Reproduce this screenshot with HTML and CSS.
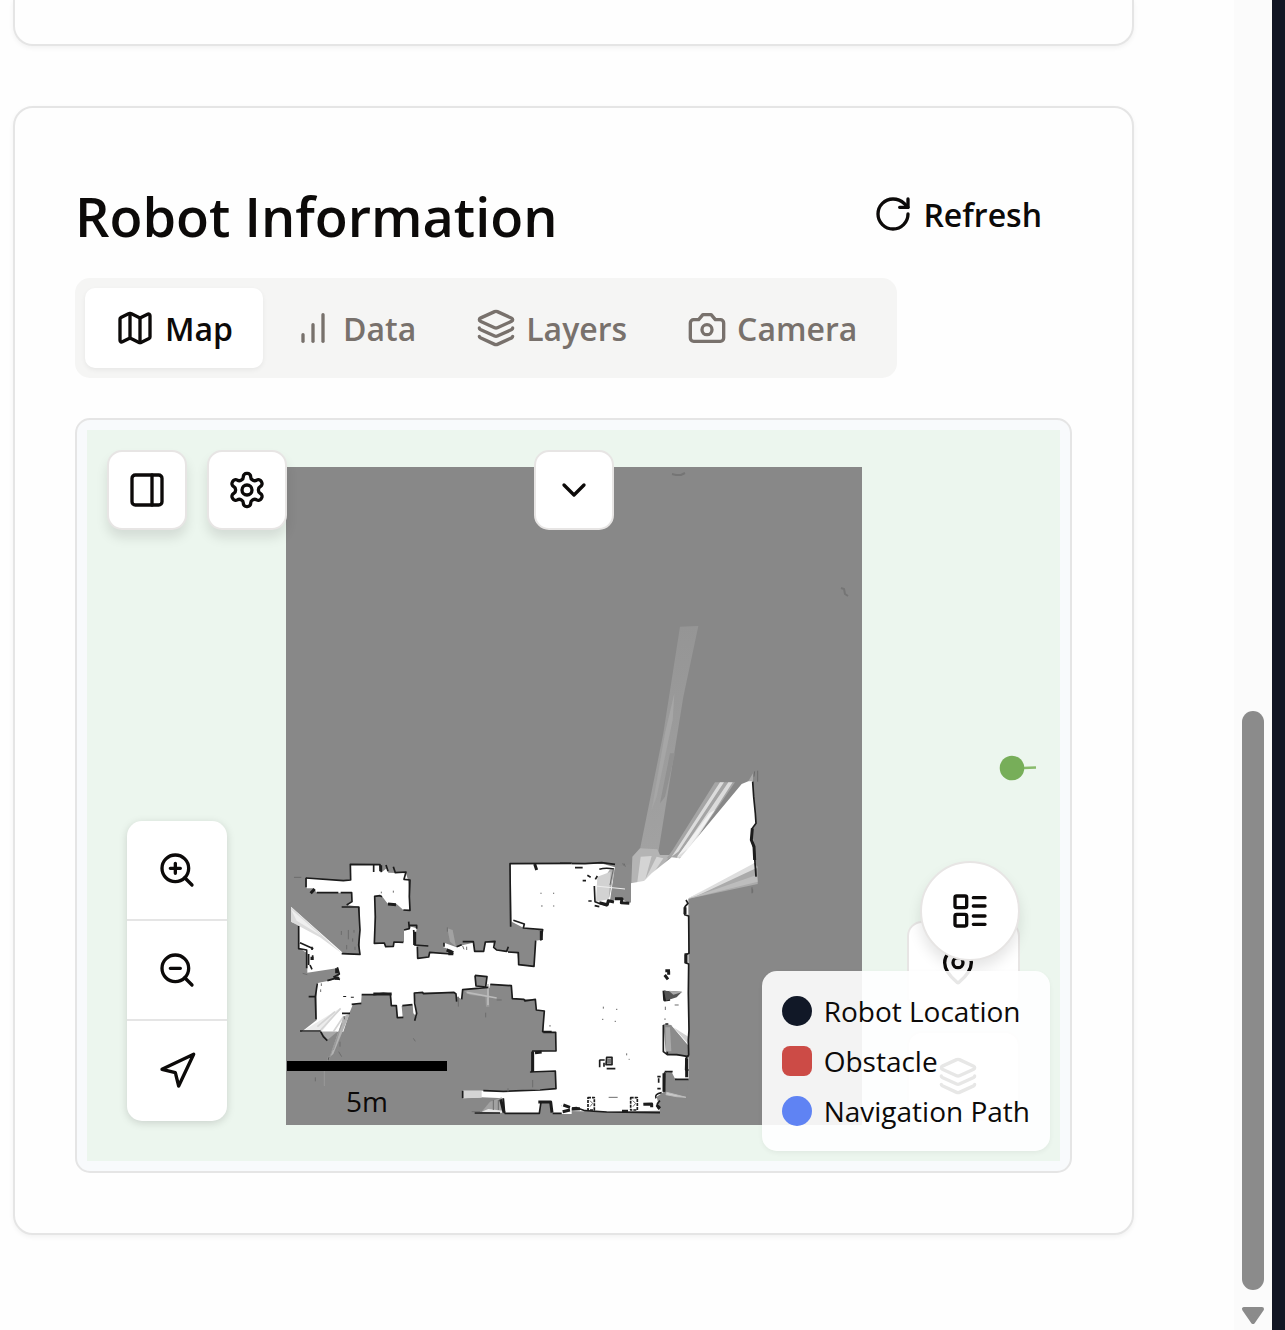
FILE: index.html
```html
<!DOCTYPE html>
<html lang="en">
<head>
<meta charset="utf-8">
<meta name="viewport" content="width=device-width, initial-scale=1">
<title>Robot Information</title>
<link rel="stylesheet" href="styles.css">
</head>
<body>
<svg class="sprite" aria-hidden="true">
  <symbol id="i-layers" viewBox="0 0 24 24"><path d="M12.83 2.18a2 2 0 0 0-1.66 0L2.6 6.08a1 1 0 0 0 0 1.83l8.58 3.91a2 2 0 0 0 1.66 0l8.58-3.9a1 1 0 0 0 0-1.83z"/><path d="M2 12a1 1 0 0 0 .58.91l8.6 3.91a2 2 0 0 0 1.65 0l8.58-3.9A1 1 0 0 0 22 12"/><path d="M2 17a1 1 0 0 0 .58.91l8.6 3.91a2 2 0 0 0 1.65 0l8.58-3.9A1 1 0 0 0 22 17"/></symbol>
</svg>
<main class="page">
  <section class="card card-previous"></section>

  <section class="card card-robot">
    <header class="card-header">
      <h2 class="title">Robot Information</h2>
      <button class="refresh" type="button">
        <svg class="icon" viewBox="0 0 24 24"><path d="M21 12a9 9 0 1 1-9-9c2.520 0 4.930 1 6.740 2.740L21 8"/><path d="M21 3v5h-5"/></svg>
        Refresh
      </button>
    </header>

    <div class="tabs" role="tablist">
      <button class="tab tab-active" type="button" role="tab" aria-selected="true">
        <svg class="icon" viewBox="0 0 24 24"><path d="M14.106 5.553a2 2 0 0 0 1.788 0l3.659-1.830A1 1 0 0 1 21 4.619v12.764a1 1 0 0 1-.553.894l-4.553 2.277a2 2 0 0 1-1.788 0l-4.212-2.106a2 2 0 0 0-1.788 0l-3.659 1.830A1 1 0 0 1 3 19.381V6.618a1 1 0 0 1 .553-.894l4.553-2.277a2 2 0 0 1 1.788 0z"/><path d="M15 5.764v15"/><path d="M9 3.236v15"/></svg>
        Map
      </button>
      <button class="tab" type="button" role="tab" aria-selected="false">
        <svg class="icon" viewBox="0 0 24 24"><path d="M6 20v-4"/><path d="M12 20V10"/><path d="M18 20V4"/></svg>
        Data
      </button>
      <button class="tab" type="button" role="tab" aria-selected="false">
        <svg class="icon"><use href="#i-layers"/></svg>
        Layers
      </button>
      <button class="tab" type="button" role="tab" aria-selected="false">
        <svg class="icon" viewBox="0 0 24 24"><path d="M14.500 4h-5L7 7H4a2 2 0 0 0-2 2v9a2 2 0 0 0 2 2h16a2 2 0 0 0 2-2V9a2 2 0 0 0-2-2h-3l-2.500-3z"/><circle cx="12" cy="13" r="3"/></svg>
        Camera
      </button>
    </div>

    <div class="map-frame">
      <div class="map-canvas">
        <svg class="occupancy" viewBox="286 467 576 658" role="img" aria-label="Occupancy map">
          <defs>
            <linearGradient id="beam" x1="0" y1="0" x2="0" y2="1"><stop offset="0" stop-color="#959595"/><stop offset="1" stop-color="#a2a2a2"/></linearGradient>
          </defs>
          <rect x="286" y="467" width="576" height="658" fill="#888"/>
          <!-- far scan beams -->
          <g transform="translate(620 610) scale(.33333)">
            <path d="M180 50L235 48L190 260L112 745L60 718L130 370Z" fill="url(#beam)"/>
            <path d="M163 250L158 330L110 560L95 600L135 370Z" fill="#a6a6a6"/>
            <path d="M150 430L165 430L135 560L120 580Z" fill="#919191"/>
            <path d="M37 740L60 715L112 718L120 735L155 735L70 830L32 870Z" fill="#b4b4b4"/>
            <path d="M62 740L95 738L70 830L50 830Z M110 740L130 745L80 820L75 810Z" fill="#d4d4d4"/>
            <path d="M285 517L345 517L190 745L140 745L158 720Z" fill="#a5a5a5"/>
            <path d="M300 517L312 517L175 725L155 740Z M325 517L338 517L195 740L170 745Z" fill="#dcdcdc"/>
            <path d="M268 610L285 600L205 715L170 742Z" fill="#f1f1f1"/>
            <path d="M398 755L413 770L413 822L200 868Z" fill="#ababab"/>
            <path d="M398 755L408 775L230 858L200 868Z" fill="#dedede"/>
            <path d="M410 795L413 815L200 868Z" fill="#bdbdbd"/>
            <path d="M32 890L34 822L55 820L70 815L95 790L155 742L180 745L365 522L385 514L397 505L400 540L408 640L397 660L405 758L200 868L195 890Z" fill="#fff"/>
            <path d="M385 514L399 490V514Z" fill="#aaa"/>
            <path d="M404 484L402 500M413 482V515M410 775V800" class="speck"/>
            <path d="M398 515L401 560L406 610L408 640L396 656L395 690L402 715L405 758L408 800" class="wall"/>
            <path d="M397 655L394 690L402 710L404 750" class="wall wall-thick"/>
            <path d="M396 832V850M8 760L15 775M0 838L16 836" class="speck"/>
          </g>
          <!-- main hall -->
          <g transform="translate(560 840) scale(.33333)">
            <path d="M-5 70L130 72L165 82L152 180L185 178L208 190L212 130L385 100L385 175L386 720L345 716L318 695L312 755L290 770L300 812L130 815L-5 812Z" fill="#fff"/>
            <path d="M150 88L164 90L148 172L128 178L134 112Z" fill="#b0b0b0"/>
            <path d="M112 110L152 95L146 178L108 185Z" fill="#d2d2d2"/>
            <path d="M165 82L213 72L213 188L185 176L150 182Z" fill="#8a8a8a"/>
            <path d="M106 138L195 147" stroke="#eee" stroke-width="3"/>
            <path d="M310 552L334 555L384 612L384 648L318 644Z" fill="#8b8b8b"/>
            <path d="M316 562L330 562L334 634L318 634Z" fill="#a9a9a9"/>
            <path d="M334 556L386 575L386 618Z" fill="#fff"/>
            <path d="M340 562L385 590L385 612Z" fill="#d0d0d0"/>
            <path d="M314 698L335 696L345 716L386 720L380 775L318 760Z" fill="#888"/>
            <path d="M320 757L378 772L350 770L318 764Z" fill="#ccc" stroke="#bbb" stroke-width="3"/>
            <path d="M0 70L75 71L125 68L165 73" class="wall"/>
            <path d="M45 83H68M118 88Q136 82 162 87M112 108L106 118M103 138L105 185L122 192L142 198M85 183H95M68 122H78M82 106L92 112M104 197L118 200" class="wall"/>
            <path d="M160 88L150 135" class="speck"/>
            <path d="M118 188L142 194L145 182L162 186M165 176L186 176L184 188L208 190" class="wall wall-thick"/>
            <path d="M378 180L384 190L375 200L374 224L386 228L387 340L376 345V368L386 372L385 460L387 570L385 600L386 645L378 655L377 690L386 690M386 718L345 718" class="wall"/>
            <path d="M375 202V222M378 340V370M380 655V712" class="wall wall-thick"/>
            <path d="M316 392H330M314 405L324 418M326 394V404M312 452L314 480L330 478" class="wall wall-thick"/>
            <path d="M312 452L366 455L350 472L318 482Z" fill="#555"/>
            <path d="M326 452L368 456L340 464Z" fill="#aaa"/>
            <path d="M316 552H325M310 555V635L322 644H350L386 650M314 695H338M314 697L312 755M322 635V645M292 710H302M296 715V728M292 746H302M305 758Q282 762 288 775M300 782Q284 796 298 808" class="wall"/>
            <path d="M312 700V755M250 793L275 792L275 802M290 795L300 805" class="wall wall-thick"/>
            <path d="M140 652H156V674H138ZM118 660H134M119 660V682M132 668V680M140 686H166" class="wall"/>
            <path d="M141 656H153V671H141Z" fill="#777"/>
            <path d="M0 795L25 795L28 805L50 803L75 812L140 816L300 818" class="wall"/>
            <path d="M0 795H20M30 808L60 806M186 814H204" class="wall wall-thick"/>
            <path d="M84 773H103V810H84ZM212 773H232V810H212Z" class="wall" stroke-dasharray="9 3"/>
            <path d="M90 782L98 790L90 800M218 782L227 790L219 800" class="speck"/>
            <path d="M130 500V506M168 508H172M126 538H130M164 544H168M200 640V646M206 658H209M146 772H173M316 500V510M315 535V540M344 495H356M192 70L196 80M578 148V158" class="speck"/>
          </g>
          <!-- corridor and west rooms -->
          <g transform="translate(280 850) scale(.33333)">
            <path d="M80 85L190 92L212 90L212 44L300 45L303 68L320 55L325 68L378 70L384 90L389 180L370 180L350 162L322 160L305 137L284 137L284 280L312 280L316 290L340 290L342 278L372 277L372 238L388 236L394 230L410 235L403 285L412 290L412 325L447 321L450 307L500 312L522 312L515 300L490 292L492 278L530 292L550 285L580 278L584 305L611 305L617 278L640 278L646 300L712 310L716 345L762 350L768 272L780 270L788 240L733 235L695 215L692 40L875 40V775L845 765L848 790L818 790L814 756L783 756L778 790L674 790L672 745L605 742L548 745L548 722L670 722L828 716L826 665L757 667L758 605L826 602L826 547L790 545L793 482L768 480L766 448L697 446L694 407L631 402L628 414L548 418L545 448L532 440L522 427L403 428L410 500L400 490L398 463L365 468L368 502L352 502L350 467L335 467L333 431L245 434L243 462L218 465L208 490L190 545L65 545L110 510L110 400L168 388L178 375L170 355L82 368L82 310L58 295L57 225L33 215L33 170L185 305L190 312L240 314L240 170L200 165L215 155L215 128L110 128L100 115L80 115Z" fill="#fff"/>
            <path d="M845 762H875V792H845Z" fill="#fff"/>
            <path d="M585 376L621 380L617 411L588 408Z" fill="#888"/>
            <path d="M33 170L185 310L120 262L33 215Z" fill="#dcdcdc"/>
            <path d="M33 178L125 258L50 212Z" fill="#efefef"/>
            <path d="M65 545L180 475L125 545Z" fill="#ececec"/>
            <path d="M182 475L118 545M165 485L112 530M190 500L160 545" stroke="#d5d5d5" stroke-width="5"/>
            <path d="M190 500L210 490L160 612L150 620Z" fill="#b3b3b3"/>
            <path d="M186 520L150 620M178 545L160 600" stroke="#999" stroke-width="3"/>
            <path d="M125 545L172 545L142 570Z" fill="#a8a8a8"/>
            <path d="M150 620L140 650L145 620ZM133 660V708" stroke="#999" stroke-width="3"/>
            <path d="M548 722L605 722V743L548 745Z" fill="#d4d4d4"/>
            <path d="M630 755L665 742L672 785L605 785Z" fill="#a2a2a2"/>
            <path d="M605 785L625 777L668 782V789Z" fill="#e8e8e8"/>
            <path d="M502 235L518 240L528 290L510 275Z" fill="#a2a2a2"/>
            <path d="M548 420L625 414L628 470L618 470L616 440L570 435Z" fill="#9b9b9b"/>
            <path d="M560 427L650 444M624 402V465" stroke="#bbb" stroke-width="5"/>
            <path d="M78 83L78 112M110 128H175M182 128H215L216 155L200 165M185 171L236 171L240 240L236 285L240 313L185 311" class="wall"/>
            <path d="M78 84L190 92L212 90L211 43L300 44L304 66M281 46V66M318 45L324 64M340 50L346 68L378 66L372 88L390 90L388 140L390 181L370 180" class="wall"/>
            <path d="M92 130L104 117M302 46V64M324 162L348 164" class="wall wall-thick"/>
            <path d="M306 140L300 137L284 139L286 200L283 280L313 279L317 290L340 289L342 276L370 277M372 240L388 236L386 215M388 226H410V236M401 240L404 285L445 288M412 290L413 325L446 321L449 307L512 312" class="wall"/>
            <path d="M404 245V285M500 300L520 308M505 311H520" class="wall wall-thick"/>
            <path d="M492 278V290M530 290L545 284M548 275L580 275L584 304L611 304L616 276L645 274L641 292L650 300L680 304L685 290M684 306L715 308L716 344L762 349L767 272M700 211L733 222L730 234L788 239L782 272M692 230L691 150L690 41L875 40" class="wall"/>
            <path d="M784 242V270M764 42L770 60" class="wall wall-thick"/>
            <path d="M585 376L621 380L617 411L588 408L585 376M545 448L548 419L625 412M631 403L694 407L697 446L732 448L735 453L766 448L769 480L793 483L788 545L815 545M790 547H827L828 603H758L757 666L752 666L826 663L828 716L780 720L670 724L610 722M530 455L528 432L522 427L430 431L428 427L403 429L404 460L410 490L404 512M397 464L367 467M370 502L352 503L349 467L334 467L331 432L310 430L280 434L245 434M244 460L215 463" class="wall"/>
            <path d="M280 432H335M758 605V666M765 608L785 606M662 748L672 788M775 756H812L816 788M850 765L870 772M848 785L870 780" class="wall wall-thick"/>
            <path d="M548 722V745M670 745L674 790M584 789H660M674 790H778L783 756M818 790L845 790" class="wall"/>
            <path d="M56 228V296L80 300V355M60 278L100 296M86 312V345M96 290V300M98 316V330M90 345L96 358M172 352L178 372L160 382M142 392L165 385L180 388M112 400L106 440L108 508M86 440H108M60 543H122M122 545L130 560L142 572M186 490H210" class="wall"/>
            <path d="M170 355V370M165 385H178M96 320V330M194 438V441M217 440V443" class="wall wall-thick"/>
            <path d="M68 370L82 374M42 82H64M184 243V255M205 240V268M222 240V248M218 265V275M200 285V298M225 290V300M180 575V590M176 605L185 620M106 682V694M400 565L406 574M617 488V502M304 125V130M340 122V128M783 128V132M821 128V132M783 168H788M819 168H823M548 288L552 298M560 290V300M684 715V725M575 785H600M640 750V780M655 750V780M535 440V470M650 450H665M758 690V712M502 232V245M810 525V530M124 400V408M122 418V426M192 498L194 508" class="speck"/>
          </g>
          <path d="M672 474L676 475L681 475L685 473M841 588L844 589L845 594L848 596" stroke="#757575" stroke-width="2" fill="none"/>
        </svg>

        <svg class="robot" viewBox="0 0 38 26" aria-hidden="true"><path d="M24 13L37 12.500" stroke="#88bb6b" stroke-width="2.500"/><circle cx="13" cy="13" r="12.300" fill="#77ae59"/></svg>

        <div class="toolbar">
          <button class="tool" type="button" aria-label="Toggle panel"><svg class="icon" viewBox="0 0 24 24"><rect x="3" y="3" width="18" height="18" rx="2"/><path d="M15 3v18"/></svg></button>
          <button class="tool" type="button" aria-label="Settings"><svg class="icon" viewBox="0 0 24 24"><path d="M12.220 2h-.44a2 2 0 0 0-2 2v.18a2 2 0 0 1-1 1.730l-.43.25a2 2 0 0 1-2 0l-.15-.08a2 2 0 0 0-2.730.73l-.22.38a2 2 0 0 0 .73 2.730l.15.1a2 2 0 0 1 1 1.720v.51a2 2 0 0 1-1 1.740l-.15.09a2 2 0 0 0-.73 2.730l.22.38a2 2 0 0 0 2.730.73l.15-.08a2 2 0 0 1 2 0l.43.25a2 2 0 0 1 1 1.730V20a2 2 0 0 0 2 2h.44a2 2 0 0 0 2-2v-.18a2 2 0 0 1 1-1.730l.43-.25a2 2 0 0 1 2 0l.15.08a2 2 0 0 0 2.730-.73l.22-.39a2 2 0 0 0-.73-2.730l-.15-.08a2 2 0 0 1-1-1.740v-.5a2 2 0 0 1 1-1.740l.15-.09a2 2 0 0 0 .73-2.730l-.22-.38a2 2 0 0 0-2.730-.73l-.15.08a2 2 0 0 1-2 0l-.43-.25a2 2 0 0 1-1-1.730V4a2 2 0 0 0-2-2z"/><circle cx="12" cy="12" r="3"/></svg></button>
        </div>
        <button class="tool tool-expand" type="button" aria-label="Expand"><svg class="icon" viewBox="0 0 24 24"><path d="m6 9 6 6 6-6"/></svg></button>

        <div class="zoom">
          <button class="zoom-button" type="button" aria-label="Zoom in"><svg class="icon" viewBox="0 0 24 24"><circle cx="11" cy="11" r="8"/><path d="m21 21-4.350-4.350M11 8v6M8 11h6"/></svg></button>
          <button class="zoom-button" type="button" aria-label="Zoom out"><svg class="icon" viewBox="0 0 24 24"><circle cx="11" cy="11" r="8"/><path d="m21 21-4.350-4.350M8 11h6"/></svg></button>
          <button class="zoom-button" type="button" aria-label="Locate"><svg class="icon" viewBox="0 0 24 24"><path d="m3 11 19-9-9 19-2-8-8-2z"/></svg></button>
        </div>

        <div class="scale"><div class="scale-bar"></div>5m</div>

        <div class="side-tools">
          <button class="side-button" type="button" aria-label="Places"><svg class="icon" viewBox="0 0 24 24"><path d="M20 10c0 4.993-5.539 10.193-7.399 11.799a1 1 0 0 1-1.202 0C9.539 20.193 4 14.993 4 10a8 8 0 0 1 16 0"/><circle cx="12" cy="10" r="3"/></svg></button>
          <button class="side-button" type="button" aria-label="Map layers"><svg class="icon"><use href="#i-layers"/></svg></button>
        </div>
        <button class="legend-toggle" type="button" aria-label="Legend"><svg class="icon" viewBox="0 0 24 24"><rect x="3" y="3" width="7" height="7" rx="1"/><rect x="3" y="14" width="7" height="7" rx="1"/><path d="M14 4h7M14 9h7M14 15h7M14 20h7"/></svg></button>

        <ul class="legend">
          <li class="legend-row"><span class="swatch swatch-robot"></span>Robot Location</li>
          <li class="legend-row"><span class="swatch swatch-obstacle"></span>Obstacle</li>
          <li class="legend-row"><span class="swatch swatch-path"></span>Navigation Path</li>
        </ul>
      </div>
    </div>
  </section>
</main>
<div class="scrollbar" aria-hidden="true">
  <div class="scroll-thumb"></div>
  <svg class="scroll-arrow" viewBox="0 0 24 20"><path d="M3 3H21L12 16Z" fill="#8b8b8b" stroke="#8b8b8b" stroke-width="4" stroke-linejoin="round"/></svg>
</div>
<div class="backdrop-edge"></div>
</body>
</html>
```
FILE: styles.css
```css
* { box-sizing: border-box; }

body {
  margin: 0;
  min-height: 100vh;
  display: flex;
  background: #fefefe;
  color: #0c0a09;
  font-family: "Open Sans", "Noto Sans", sans-serif;
}

button {
  font: inherit;
  color: inherit;
  border: 0;
  padding: 0;
  background: none;
  display: flex;
  align-items: center;
  justify-content: center;
}

.sprite { position: absolute; width: 0; height: 0; }

.icon {
  width: 40px;
  height: 40px;
  flex: none;
  fill: none;
  stroke: currentColor;
  stroke-width: 2;
  stroke-linecap: round;
  stroke-linejoin: round;
}

.page {
  flex: 1;
  min-width: 0;
  padding: 0 100px 95px 13px;
  display: flex;
  flex-direction: column;
  gap: 60px;
}

.card {
  border: 2px solid #e5e5e5;
  border-radius: 20px;
  background: #fefefe;
  box-shadow: 0 2px 5px rgba(0, 0, 0, .05);
}

.card-previous {
  height: 46px;
  border-top: 0;
  border-top-left-radius: 0;
  border-top-right-radius: 0;
}

.card-robot { padding: 60px; }

.card-header {
  height: 92px;
  display: flex;
  align-items: center;
  justify-content: space-between;
}

.title {
  margin: 0;
  padding-top: 4px;
  font-size: 54px;
  line-height: 60px;
  font-weight: 600;
}

.refresh {
  height: 80px;
  padding: 0 30px;
  gap: 10px;
  font-size: 32px;
  font-weight: 600;
}

.tabs {
  width: fit-content;
  height: 100px;
  margin-top: 18px;
  padding: 10px;
  display: flex;
  border-radius: 15px;
  background: #f5f5f4;
  color: #78716c;
}

.tab {
  padding: 0 30px;
  gap: 10px;
  border-radius: 10px;
  font-size: 32px;
  font-weight: 600;
}

.tab-active {
  background: #fff;
  color: #0c0a09;
  box-shadow: 0 2px 5px rgba(0, 0, 0, .06);
}

.map-frame {
  margin-top: 40px;
  padding: 10px;
  border: 2px solid #e5e5e5;
  border-radius: 15px;
  background: #f8fafc;
}

.map-canvas {
  position: relative;
  height: 731px;
  display: flex;
  align-items: center;
  justify-content: center;
  background: #ecf6ee;
}

.occupancy { width: 576px; height: 658px; }

.wall {
  fill: none;
  stroke: #1c1c1c;
  stroke-width: 5;
  stroke-linejoin: round;
}

.wall-thick { stroke-width: 9; }

.speck {
  fill: none;
  stroke: #6c6c6c;
  stroke-width: 3;
}

.robot {
  position: absolute;
  top: 325px;
  right: 23px;
  width: 38px;
  height: 26px;
}

.toolbar {
  position: absolute;
  top: 20px;
  left: 20px;
  display: flex;
  gap: 20px;
}

.tool {
  width: 80px;
  height: 80px;
  border: 2px solid #e7e5e4;
  border-radius: 15px;
  background: #fff;
  box-shadow: 0 8px 12px rgba(0, 0, 0, .1);
}

.tool-expand {
  position: absolute;
  top: 20px;
  left: calc(50% - 40px);
  box-shadow: none;
}

.zoom {
  position: absolute;
  left: 40px;
  bottom: 40px;
  width: 100px;
  overflow: hidden;
  border-radius: 15px;
  background: #fff;
  box-shadow: 0 2px 8px rgba(0, 0, 0, .15);
}

.zoom-button {
  width: 100%;
  height: 100px;
  border-bottom: 2px solid #e5e5e5;
}

.zoom-button:last-child { border-bottom: 0; }

.scale {
  position: absolute;
  left: 200px;
  bottom: 40px;
  width: 160px;
  text-align: center;
  font-size: 28px;
  line-height: 40px;
}

.scale-bar {
  height: 10px;
  margin-bottom: 10px;
  background: #000;
}

.side-tools {
  position: absolute;
  right: 40px;
  bottom: 40px;
  display: flex;
  flex-direction: column;
  gap: 20px;
}

.side-button {
  width: 113px;
  height: 90px;
  padding-right: 11px;
  border: 2px solid #e7e5e4;
  border-radius: 15px;
  background: #fff;
}

.legend-toggle {
  position: absolute;
  right: 40px;
  bottom: 200px;
  width: 100px;
  height: 100px;
  border: 2px solid #e7e5e4;
  border-radius: 50%;
  background: #fff;
  box-shadow: 0 8px 14px rgba(0, 0, 0, .1);
}

.legend {
  position: absolute;
  right: 10px;
  bottom: 10px;
  margin: 0;
  padding: 20px;
  display: flex;
  flex-direction: column;
  gap: 10px;
  list-style: none;
  border-radius: 15px;
  background: rgba(255, 255, 255, .9);
  box-shadow: 0 2px 5px rgba(0, 0, 0, .05);
  font-size: 28px;
  line-height: 40px;
}

.legend-row {
  display: flex;
  align-items: center;
  gap: 12px;
}

.swatch {
  width: 30px;
  height: 30px;
  border-radius: 50%;
}

.swatch-robot { background: #111827; }
.swatch-obstacle { background: #cc4b46; border-radius: 8px; }
.swatch-path { background: #5f83f3; }

.scrollbar {
  width: 38px;
  padding-bottom: 4px;
  display: flex;
  flex-direction: column;
  align-items: center;
  justify-content: flex-end;
  gap: 16px;
  background: #fbfbfb;
}

.scroll-thumb {
  width: 22px;
  height: 579px;
  border-radius: 11px;
  background: #8b8b8b;
}

.scroll-arrow { width: 24px; height: 20px; }

.backdrop-edge { width: 13px; background: #121624; }
```
